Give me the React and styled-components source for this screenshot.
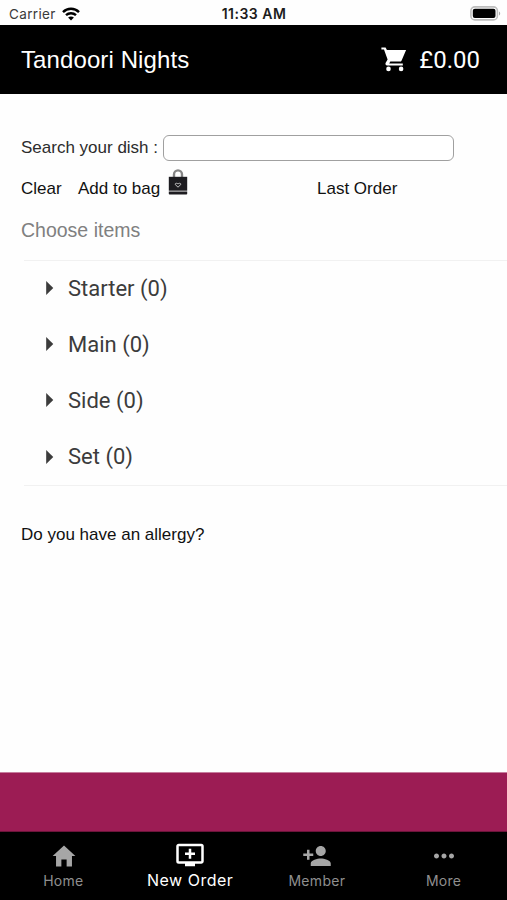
import { useState } from "react";
import styled, { createGlobalStyle } from "styled-components";
import { IoMdHome } from "react-icons/io";
import {
  MdAddToQueue,
  MdArrowRight,
  MdMoreHoriz,
  MdPersonAdd,
} from "react-icons/md";

const GlobalStyle = createGlobalStyle`
  * {
    box-sizing: border-box;
  }

  body {
    margin: 0;
    background: #fff;
    font-family: "Liberation Sans", Arial, sans-serif;
  }
`;

const Screen = styled.div`
  display: flex;
  flex-direction: column;
  width: 507px;
  height: 900px;
  overflow: hidden;
  background: #fefefe;
`;

// Status bar
const StatusBar = styled.div`
  display: grid;
  grid-template-columns: 1fr auto 1fr;
  align-items: center;
  height: 25px;
  padding: 2px 6px 0 9px;
  font-family: Inter, sans-serif;
  font-size: 13.5px;
  line-height: 20px;
  color: #3a3a3a;
`;

const Carrier = styled.div`
  display: flex;
  align-items: center;
  gap: 6px;
  letter-spacing: 0.35px;
`;

const Clock = styled.div`
  margin-right: 2px;
  font-size: 14px;
  font-weight: 600;
  letter-spacing: 0.5px;
  color: #1c1c1c;
`;

const Battery = styled.svg`
  justify-self: end;
`;

// Header
const Header = styled.header`
  display: flex;
  align-items: center;
  justify-content: space-between;
  height: 69px;
  padding: 0 27px 0 21px;
  background: #000;
  color: #fff;
`;

const Title = styled.h1`
  margin: 0;
  font-size: 24px;
  font-weight: 400;
  letter-spacing: 0.1px;
  line-height: 28px;
`;

const Basket = styled.div`
  display: flex;
  align-items: center;
  gap: 12px;
  font-family: Roboto, sans-serif;
  font-size: 24px;
  line-height: 28px;
`;

// Content
const Content = styled.main`
  flex: 1;
  padding-top: 41px;
`;

const SearchRow = styled.label`
  display: flex;
  align-items: center;
  gap: 5px;
  height: 26px;
  padding-left: 21px;
  font-size: 17px;
  color: #2c2c2c;
`;

const SearchInput = styled.input`
  width: 291px;
  height: 26px;
  padding: 0 8px;
  border: 1.5px solid #a0a0a0;
  border-radius: 6px;
  background: #fff;
  font: inherit;
  outline: none;
`;

const Actions = styled.div`
  display: grid;
  grid-template-columns: 57px 239px auto;
  justify-content: start;
  height: 54px;
  padding: 8px 0 0 21px;
`;

const Action = styled.button`
  display: flex;
  align-items: flex-start;
  gap: 8px;
  height: 28px;
  padding: 0;
  border: none;
  background: none;
  font-family: inherit;
  font-size: 17px;
  line-height: 20px;
  color: #111;
  white-space: nowrap;
`;

const ActionText = styled.span`
  padding-top: 10px;
`;

const SectionTitle = styled.h2`
  margin: 0;
  padding: 4px 0 19px 21px;
  font-size: 19.5px;
  font-weight: 400;
  line-height: 22px;
  color: #808080;
`;

const MenuList = styled.ul`
  height: 226px;
  margin: 0 0 0 24px;
  padding: 0;
  border-top: 1px solid #f1f1f1;
  border-bottom: 1px solid #f1f1f1;
  list-style: none;
`;

const MenuItem = styled.li`
  display: flex;
  align-items: center;
  gap: 2px;
  height: 56.2px;
  padding: 0 0 2px 8px;
  font-family: Roboto, sans-serif;
  font-size: 22px;
  color: #3c3c3c;
`;

const Allergy = styled.p`
  margin: 0;
  padding: 39px 0 0 21px;
  font-size: 17px;
  line-height: 20px;
  color: #111;
`;

const Banner = styled.div`
  height: 60px;
  background: #9c1c54;
  border-top: 1px solid #c67d9d;
  border-bottom: 1px solid #6b153a;
`;

// Tab bar
const TabBar = styled.nav`
  display: grid;
  grid-template-columns: repeat(4, 1fr);
  height: 68px;
  background: #000;
`;

const Tab = styled.button`
  display: flex;
  flex-direction: column;
  align-items: center;
  padding: ${(props) => (props.$active ? "8px 0 0" : "9px 0 0")};
  border: none;
  background: none;
  font-family: Inter, sans-serif;
  font-size: ${(props) => (props.$active ? "16px" : "14px")};
  line-height: 20px;
  letter-spacing: ${(props) => (props.$active ? "0.5px" : "0.3px")};
  color: ${(props) => (props.$active ? "#fff" : "#8f8f8f")};
`;

const TabIcon = styled.span`
  display: flex;
  align-items: center;
  height: 30px;
  padding-left: ${(props) => (props.$active ? "0" : "1px")};
  color: ${(props) => (props.$active ? "#fff" : "#a6a6a6")};
`;

const categories = [
  { id: 1, name: "Starter", count: 0 },
  { id: 2, name: "Main", count: 0 },
  { id: 3, name: "Side", count: 0 },
  { id: 4, name: "Set", count: 0 },
];

const tabs = [
  { name: "Home", Icon: IoMdHome, size: 28 },
  { name: "New Order", Icon: MdAddToQueue, size: 30 },
  { name: "Member", Icon: MdPersonAdd, size: 30 },
  { name: "More", Icon: MdMoreHoriz, size: 30 },
];

const WifiIcon = () => (
  <svg width="18" height="14" viewBox="0 0 18 14">
    <g fill="none" stroke="#000" strokeWidth="2.4">
      <path d="M1 5.1C5.4.6 12.6.6 17 5.1" />
      <path d="M4 8.2c2.8-2.7 7.2-2.7 10 0" />
    </g>
    <path d="M9 13.6 6.1 10.6c1.6-1.5 4.2-1.5 5.8 0z" />
  </svg>
);

const BatteryIcon = () => (
  <Battery width="31" height="15" viewBox="0 0 31 15">
    <rect x="0.9" y="0.9" width="26.5" height="13" rx="4" fill="#fff" stroke="#bdbdbd" strokeWidth="1.6" />
    <rect x="2.8" y="2.7" width="22.7" height="9.4" rx="2" />
    <path d="M29 5.4c1.6.7 1.6 3.4 0 4.1z" fill="#aaa" />
  </Battery>
);

const CartIcon = () => (
  <svg width="26" height="25" viewBox="0 0 26 25" fill="#fff">
    <path d="M.4.4h4.2l1.3 2.7h19.2l-4.6 10.6a1.6 1.6 0 0 1-1.4.9H9.3l-1.1 2h13.6v1.9H6.2c-1.6 0-2.2-1.6-1.5-2.8l1.9-3.2L3 2.6H.4z" />
    <circle cx="7.5" cy="21.9" r="2.3" />
    <circle cx="20.1" cy="21.9" r="2.3" />
  </svg>
);

const BagIcon = () => (
  <svg width="20" height="26" viewBox="0 0 20 26">
    <path d="M6 9V5.4a4 4 0 0 1 8 0V9" fill="none" stroke="#858585" strokeWidth="2.4" />
    <path d="M.8 7.8h18.4v13.9H.8z" fill="#1d1c20" />
    <path d="M.8 22.6h18.4v2.2a.8.8 0 0 1-.8.8H1.6a.8.8 0 0 1-.8-.8z" fill="#1d1c20" />
    <path d="M10 18.2 7.2 15.5c-.5-1.2 1.7-1.8 2.8-.5 1.1-1.3 3.3-.7 2.8.5z" fill="none" stroke="#c4c4c4" strokeWidth="1" />
  </svg>
);

export default function App() {
  const [activeTab, setActiveTab] = useState("New Order");
  const [search, setSearch] = useState("");

  return (
    <>
      <GlobalStyle />
      <Screen>
        <StatusBar>
          <Carrier>
            Carrier
            <WifiIcon />
          </Carrier>
          <Clock>11:33 AM</Clock>
          <BatteryIcon />
        </StatusBar>
        <Header>
          <Title>Tandoori Nights</Title>
          <Basket>
            <CartIcon />
            £0.00
          </Basket>
        </Header>
        <Content>
          <SearchRow>
            Search your dish :
            <SearchInput value={search} onChange={(e) => setSearch(e.target.value)} />
          </SearchRow>
          <Actions>
            <Action onClick={() => setSearch("")}>
              <ActionText>Clear</ActionText>
            </Action>
            <Action>
              <ActionText>Add to bag</ActionText>
              <BagIcon />
            </Action>
            <Action>
              <ActionText>Last Order</ActionText>
            </Action>
          </Actions>
          <SectionTitle>Choose items</SectionTitle>
          <MenuList>
            {categories.map((item) => (
              <MenuItem key={item.id}>
                <MdArrowRight size={34} />
                {item.name} ({item.count})
              </MenuItem>
            ))}
          </MenuList>
          <Allergy>Do you have an allergy?</Allergy>
        </Content>
        <Banner />
        <TabBar>
          {tabs.map(({ name, Icon, size }) => (
            <Tab key={name} $active={name === activeTab} onClick={() => setActiveTab(name)}>
              <TabIcon $active={name === activeTab}>
                <Icon size={size} />
              </TabIcon>
              {name}
            </Tab>
          ))}
        </TabBar>
      </Screen>
    </>
  );
}
